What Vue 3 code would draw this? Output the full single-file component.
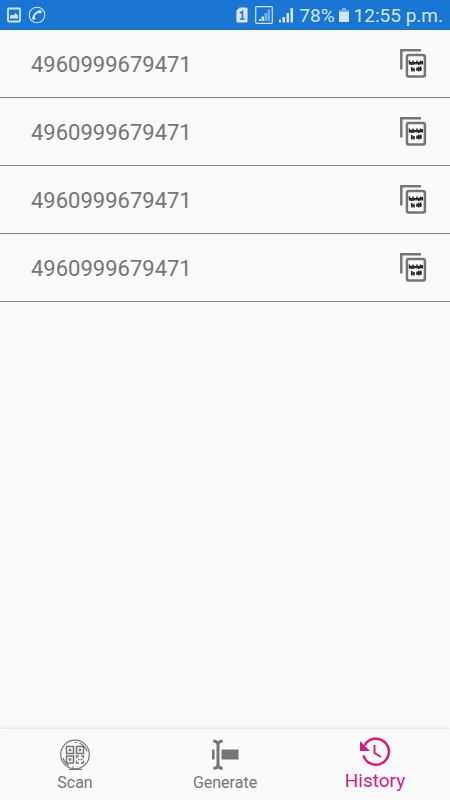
<script setup>
import { ref } from 'vue'

const activeTab = ref('history')

const codes = ref([
  { id: 1, value: '4960999679471' },
  { id: 2, value: '4960999679471' },
  { id: 3, value: '4960999679471' },
  { id: 4, value: '4960999679471' }
])

function copyCode(value) {
  if (navigator.clipboard) navigator.clipboard.writeText(value)
}
</script>

<template>
  <div class="screen">
    <header class="status-bar">
      <div class="status-left">
        <!-- picture saved -->
        <svg width="14" height="16" viewBox="0 0 14 16">
          <rect x="1" y="1.5" width="12" height="13" rx="1" fill="none" stroke="currentColor" stroke-width="1.8" />
          <path d="M3 11.5V9l2-1.500 1.500 1L8.500 6l2.500 2.500v3z" fill="currentColor" />
        </svg>
        <!-- call -->
        <svg width="18" height="18" viewBox="0 0 18 18">
          <circle cx="9" cy="9" r="7.8" fill="none" stroke="currentColor" stroke-width="1.1" />
          <path d="M5.4 12.6C5.6 8.8 8 6 12 5.400" fill="none" stroke="currentColor" stroke-width="2" />
          <path d="M10.2 4.2l2.8-.3.8 3-2.6.6zM4.1 10.8l2.800-.5.7 2.900-2.800.9z" fill="currentColor" />
        </svg>
      </div>
      <div class="status-right">
        <!-- sim 1 -->
        <svg width="12" height="16" viewBox="0 0 12 16">
          <path d="M3.5 0.5H10a1.6 1.6 0 0 1 1.6 1.6v11.8a1.6 1.6 0 0 1-1.6 1.6H2A1.6 1.6 0 0 1 .4 13.9V3.6z" fill="currentColor" />
          <path d="M4 6.2L6.4 4.500V12M4 12h4.600" fill="none" stroke="#1976d2" stroke-width="1.6" />
        </svg>
        <svg class="sim-signal" width="18" height="18" viewBox="0 0 18 18">
          <rect x="0.7" y="0.7" width="16.6" height="16.6" rx="1" fill="none" stroke="currentColor" stroke-width="1.2" />
          <path d="M4 15v-2h2v2zM6.500 15v-4.500h2.500V15z" fill="currentColor" />
          <path d="M9.500 15V7H12v8zM12.500 15V3.500H15V15z" fill="currentColor" opacity="0.5" />
        </svg>
        <svg class="signal" width="16" height="16" viewBox="0 0 16 16">
          <path d="M1 15.5v-3h2v3zM4.500 15.5V10h2.500v5.5zM8.500 15.5V6H11v9.5zM12.500 15.5V1H15v14.5z" fill="currentColor" />
        </svg>
        <span class="percent">78%</span>
        <svg class="battery" width="12" height="16" viewBox="0 0 12 16">
          <path d="M4 1h4v2h3v3H1V3h3z" fill="currentColor" opacity="0.5" />
          <path d="M1 5h10v10H1z" fill="currentColor" />
        </svg>
        <time>12:55 p.m.</time>
      </div>
    </header>

    <main class="content">
      <ul class="history">
        <li v-for="code in codes" :key="code.id" class="history-item">
          <span class="code">{{ code.value }}</span>
          <button type="button" class="copy" aria-label="Copy" @click="copyCode(code.value)">
            <svg width="28" height="32" viewBox="0 0 28 32">
              <path d="M2.300 21.500V2.300H22" fill="none" stroke="#757575" stroke-width="2.500" />
              <rect x="7.900" y="7" width="18" height="21.500" rx="2" fill="#fafafa" stroke="#757575" stroke-width="2.500" />
              <path
                d="M10.5 12.500v4M12.3 14v3M14 12.500v4.500M15.800 14v2.500M18 12.500v4M19.800 14v3M21.500 12.500v4M23.300 13v3.500M10 14.800h14M12.800 19v4.500M15 20v3.500M18 19.500v3.500M19.800 18.500v5M21.700 18.500v4.500M12 21.500h3.500M17.300 21h5.500"
                fill="none" stroke="#222" stroke-width="1.500"
              />
            </svg>
          </button>
        </li>
      </ul>
    </main>

    <nav class="tabs">
      <button type="button" class="tab" :class="{ active: activeTab === 'scan' }" @click="activeTab = 'scan'">
        <svg width="32" height="32" viewBox="0 0 32 32" fill="none" stroke="currentColor">
          <circle cx="16" cy="15.500" r="14.300" stroke-width="1.200" />
          <path d="M10 30.300h13M16 3.500h2M20.500 4c4 2 6.500 5 7.500 8.500M4 19c1 3.500 3 6 6 7.600M13 28h2" stroke-width="1.200" />
          <path d="M7.500 7.500h7v7h-7zM17.500 7.500h7v7h-7zM7.500 17h7v7h-7z" stroke-width="1.500" />
          <path d="M10.500 10.500h1v1h-1zM20.500 10.500h1v1h-1zM10.500 20h1v1h-1z" stroke-width="1.500" />
          <path d="M17.500 19.500V17h2.500M22 17h2.500v2.500M17.500 21.500V24H20M22 24h2.500v-2.500M19 20.500h1.500M21.500 20.500h2" stroke-width="1.400" />
        </svg>
        <span>Scan</span>
      </button>
      <button type="button" class="tab" :class="{ active: activeTab === 'generate' }" @click="activeTab = 'generate'">
        <svg width="32" height="32" viewBox="0 0 32 32">
          <path d="M3 10.500H5.500v10H3zM12.500 10.500H29.500v10H12.500z" fill="currentColor" />
          <path
            d="M9 5v21M4.300 2.300C7 2 9 3.200 9 6c0-2.800 2-4 4.700-3.700M4.300 29.200C7 29.500 9 28.300 9 25.500c0 2.800 2 4 4.700 3.700"
            fill="none" stroke="currentColor" stroke-width="3" stroke-linejoin="round"
          />
        </svg>
        <span>Generate</span>
      </button>
      <button type="button" class="tab" :class="{ active: activeTab === 'history' }" @click="activeTab = 'history'">
        <svg width="32" height="32" viewBox="0 0 32 32" fill="none" stroke="currentColor">
          <path d="M4.500 19.500A13 13 0 1 0 5.500 9.500" stroke-width="2.500" />
          <path d="M1 5v10h10z" fill="currentColor" stroke="none" />
          <path d="M15.500 9v8l6.500 4" stroke-width="2" />
        </svg>
        <span>History</span>
      </button>
    </nav>
  </div>
</template>

<style>
body {
  margin: 0;
  background: #fafafa;
}
</style>

<style scoped>
.screen {
  display: flex;
  flex-direction: column;
  min-height: 100vh;
  background: #fafafa;
  color: #757575;
  font-family: Roboto, "Noto Sans", sans-serif;
}

svg {
  display: block;
  flex-shrink: 0;
}

.status-bar {
  display: flex;
  justify-content: space-between;
  align-items: center;
  height: 30px;
  padding: 0 7px;
  box-sizing: border-box;
  background: #1976d2;
  color: #d3e5f8;
  font-size: 19px;
}

.status-left,
.status-right {
  display: flex;
  align-items: center;
}

.status-left {
  gap: 7px;
}

.sim-signal {
  margin-left: 7px;
}

.signal {
  margin-left: 5px;
}

.percent {
  margin-left: 5px;
}

.battery {
  margin: 0 4px 0 3px;
}

.content {
  flex: 1;
}

.history {
  list-style: none;
  margin: 0;
  padding: 0;
}

.history-item {
  display: flex;
  justify-content: space-between;
  align-items: center;
  height: 68px;
  box-sizing: border-box;
  padding: 0 23px 0 31px;
  border-bottom: 1px solid #808080;
}

.code {
  padding-top: 2px;
  font-size: 22px;
}

button {
  margin: 0;
  padding: 0;
  border: 0;
  background: none;
  color: inherit;
  font-family: inherit;
  cursor: pointer;
}

.tabs {
  position: sticky;
  bottom: 0;
  display: flex;
  height: 71px;
  background: #fafafa;
  box-shadow: 0 -1px 2px rgba(0, 0, 0, 0.08);
}

.tab {
  flex: 1;
  display: flex;
  flex-direction: column;
  align-items: center;
  padding-top: 10px;
  font-size: 16px;
  line-height: 24px;
}

.tab.active {
  padding-top: 7px;
  color: #d81b7f;
  font-size: 19px;
  line-height: 26px;
}
</style>
